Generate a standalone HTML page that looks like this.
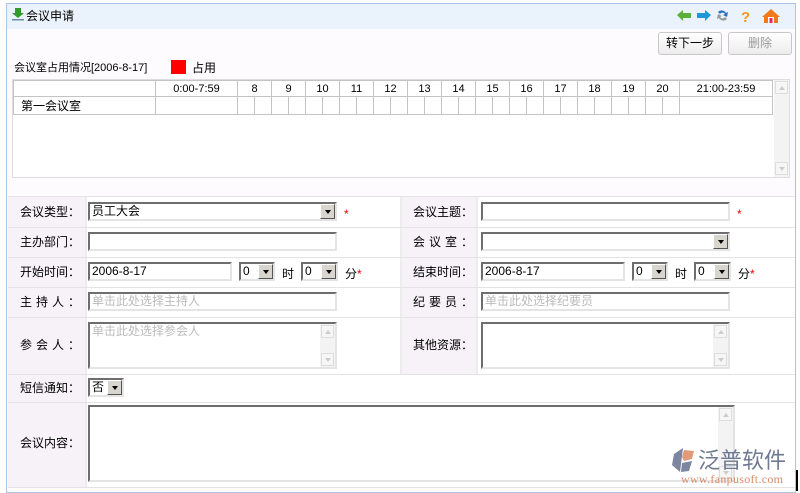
<!DOCTYPE html>
<html><head><meta charset="utf-8">
<style>
*{box-sizing:border-box;margin:0;padding:0}
body{width:800px;height:491px;background:#fff;font-family:"Liberation Sans","Noto Sans CJK SC",sans-serif;font-size:12px;color:#000;position:relative;overflow:hidden}
.a{position:absolute}
.frame{left:6px;top:3px;width:790px;height:490px;border:1px solid #a9c4e6;background:#fefbfe}
.hdr{left:7px;top:4px;width:788px;height:25px;background:#eaf2fb}
.btn{border:1px solid #c8c8c8;border-radius:3px;background:linear-gradient(#fff,#ececec);text-align:center;line-height:21px;font-size:12px}
table.tt{border-collapse:collapse;position:absolute;left:13px;top:80px;table-layout:fixed}
table.tt td{border:1px solid #c4c4c4;height:16px;font-size:11px;text-align:center;padding:0;background:#fff}
.inp{position:absolute;height:19px;background:#fff;border:2px solid;border-color:#6e6e6e #e4e4e4 #e4e4e4 #6e6e6e;font-size:12px;line-height:15px;padding-left:2px;color:#000;overflow:hidden;white-space:nowrap}
.ph{color:#bbb}
.sel .arr{position:absolute;right:0;top:0;width:15px;height:15px;background:#d8d5cf;border:1px solid;border-color:#fff #555 #555 #fff}
.sel .arr:after{content:"";position:absolute;left:4px;top:5px;border-left:3px solid transparent;border-right:3px solid transparent;border-top:4px solid #000}
.lab{position:absolute;background:#f6f2f7;text-align:center;font-size:12px}
.hl{position:absolute;height:1px;background:#e3e3e3}
.star{position:absolute;color:#e00;font-size:12px}
.sb{position:absolute;width:15px;background:#f3f3f3}
.sbb{position:absolute;left:1px;width:13px;height:13px;border:1px solid #ddd;background:#f6f6f6}
.up:after{content:"";position:absolute;left:3px;top:4px;border-left:3px solid transparent;border-right:3px solid transparent;border-bottom:4px solid #ccc}
.dn:after{content:"";position:absolute;left:3px;top:4px;border-left:3px solid transparent;border-right:3px solid transparent;border-top:4px solid #ccc}
</style></head><body>
<div class="a frame"></div>
<div class="a hdr"></div>
<svg class="a" style="left:12px;top:8px" width="12" height="13"><path d="M3 0h6v5h3l-6 5-6-5h3z" fill="#2f9a2f"/><rect x="0" y="11" width="12" height="1.5" fill="#6a8bb0"/></svg>
<div class="a" style="left:26px;top:7px;font-size:12px">会议申请</div>
<svg class="a" style="left:675px;top:8px" width="110" height="16">
<path d="M2 7l6-5v3h8v5H8v3z" fill="#5cb039"/>
<path d="M36 7l-6-5v3h-8v5h8v3z" fill="#1e98d6"/>
<path d="M43 4a5 5 0 0 1 8 1l2-1-1 5-4-2 2-1a3 3 0 0 0-5 0z" fill="#2a6fc0"/>
<path d="M52 11a5 5 0 0 1-8-1l-2 1 1-5 4 2-2 1a3 3 0 0 0 5 0z" fill="#999"/>
<text x="66" y="14" font-family="Liberation Sans" font-weight="bold" font-size="15" fill="#f39a14">?</text>
<path d="M96 1l-9 8h2v6h14V9h2z" fill="#f07a1c"/><rect x="93" y="9" width="6" height="6" fill="#fff"/><rect x="94.5" y="10" width="3" height="5" fill="#e26"/>
</svg>
<div class="a btn" style="left:658px;top:32px;width:64px;height:23px">转下一步</div>
<div class="a btn" style="left:728px;top:32px;width:64px;height:23px;color:#999">删除</div>
<div class="a" style="left:14px;top:59px;font-size:11px">会议室占用情况[2006-8-17]</div>
<div class="a" style="left:171px;top:60px;width:15px;height:14px;background:#f00"></div>
<div class="a" style="left:192px;top:59px;font-size:12px">占用</div>
<div class="a" style="left:12px;top:79px;width:778px;height:99px;background:#fff;border:1px solid #ddd"></div>
<div class="sb" style="left:774px;top:80px;height:97px"><div class="sbb up" style="top:1px"></div><div class="sbb dn" style="top:82px"></div></div>
<table class="tt">
<colgroup><col style="width:142px"><col style="width:82px">
<col style="width:17px"><col style="width:17px"><col style="width:17px"><col style="width:17px"><col style="width:17px"><col style="width:17px"><col style="width:17px"><col style="width:17px"><col style="width:17px"><col style="width:17px"><col style="width:17px"><col style="width:17px"><col style="width:17px"><col style="width:17px"><col style="width:17px"><col style="width:17px"><col style="width:17px"><col style="width:17px"><col style="width:17px"><col style="width:17px"><col style="width:17px"><col style="width:17px"><col style="width:17px"><col style="width:17px"><col style="width:17px"><col style="width:17px"><col style="width:93px"></colgroup>
<tr><td></td><td>0:00-7:59</td><td colspan="2">8</td><td colspan="2">9</td><td colspan="2">10</td><td colspan="2">11</td><td colspan="2">12</td><td colspan="2">13</td><td colspan="2">14</td><td colspan="2">15</td><td colspan="2">16</td><td colspan="2">17</td><td colspan="2">18</td><td colspan="2">19</td><td colspan="2">20</td><td>21:00-23:59</td></tr>
<tr><td style="text-align:left;padding-left:7px;font-size:12px">第一会议室</td><td></td><td></td><td></td><td></td><td></td><td></td><td></td><td></td><td></td><td></td><td></td><td></td><td></td><td></td><td></td><td></td><td></td><td></td><td></td><td></td><td></td><td></td><td></td><td></td><td></td><td></td><td></td><td></td></tr>
</table>
<div class="a" style="left:8px;top:196px;width:787px;height:291px;background:#fff"></div>
<div class="lab" style="left:8px;top:196px;width:77px;height:291px"></div>
<div class="lab" style="left:402px;top:196px;width:75px;height:178px"></div>
<div class="a" style="left:85px;top:196px;width:2px;height:291px;background:#ececec"></div>
<div class="a" style="left:400px;top:196px;width:2px;height:178px;background:#ececec"></div>
<div class="a" style="left:476px;top:196px;width:2px;height:178px;background:#ececec"></div>
<div class="hl" style="left:8px;top:196px;width:787px"></div>
<div class="hl" style="left:8px;top:227px;width:787px"></div>
<div class="hl" style="left:8px;top:257px;width:787px"></div>
<div class="hl" style="left:8px;top:287px;width:787px"></div>
<div class="hl" style="left:8px;top:317px;width:787px"></div>
<div class="hl" style="left:8px;top:374px;width:787px"></div>
<div class="hl" style="left:8px;top:402px;width:787px"></div>
<div class="hl" style="left:8px;top:487px;width:787px"></div>
<div class="a" style="left:20px;top:203px">会议类型：</div>
<div class="a" style="left:20px;top:233px">主办部门：</div>
<div class="a" style="left:20px;top:263px">开始时间：</div>
<div class="a" style="left:20px;top:293px;letter-spacing:4px">主持人：</div>
<div class="a" style="left:20px;top:336px;letter-spacing:4px">参会人：</div>
<div class="a" style="left:20px;top:379px">短信通知：</div>
<div class="a" style="left:20px;top:434px">会议内容：</div>
<div class="a" style="left:413px;top:203px">会议主题：</div>
<div class="a" style="left:413px;top:233px;letter-spacing:4px">会议室：</div>
<div class="a" style="left:413px;top:263px">结束时间：</div>
<div class="a" style="left:413px;top:293px;letter-spacing:4px">纪要员：</div>
<div class="a" style="left:413px;top:336px">其他资源：</div>
<div class="inp sel" style="left:88px;top:202px;width:249px">员工大会<span class="arr"></span></div>
<div class="star" style="left:344px;top:207px">*</div>
<div class="inp" style="left:88px;top:232px;width:249px"></div>
<div class="inp" style="left:88px;top:262px;width:144px">2006-8-17</div>
<div class="inp sel" style="left:239px;top:262px;width:36px">0<span class="arr"></span></div>
<div class="a" style="left:282px;top:265px">时</div>
<div class="inp sel" style="left:301px;top:262px;width:37px">0<span class="arr"></span></div>
<div class="a" style="left:345px;top:265px">分<span style="color:#e00">*</span></div>
<div class="inp ph" style="left:88px;top:292px;width:249px">单击此处选择主持人</div>
<div class="inp ph" style="left:88px;top:322px;width:249px;height:47px">单击此处选择参会人</div>
<div class="sb" style="left:320px;top:324px;height:43px"><div class="sbb up" style="top:1px"></div><div class="sbb dn" style="top:29px"></div></div>
<div class="inp sel" style="left:88px;top:378px;width:36px">否<span class="arr"></span></div>
<div class="inp" style="left:88px;top:405px;width:647px;height:77px"></div>
<div class="sb" style="left:718px;top:407px;height:73px"><div class="sbb up" style="top:1px"></div><div class="sbb dn" style="top:59px"></div></div>
<div class="inp" style="left:481px;top:202px;width:249px"></div>
<div class="star" style="left:737px;top:207px">*</div>
<div class="inp sel" style="left:481px;top:232px;width:249px"><span class="arr"></span></div>
<div class="inp" style="left:481px;top:262px;width:144px">2006-8-17</div>
<div class="inp sel" style="left:632px;top:262px;width:36px">0<span class="arr"></span></div>
<div class="a" style="left:675px;top:265px">时</div>
<div class="inp sel" style="left:694px;top:262px;width:37px">0<span class="arr"></span></div>
<div class="a" style="left:738px;top:265px">分<span style="color:#e00">*</span></div>
<div class="inp ph" style="left:481px;top:292px;width:249px">单击此处选择纪要员</div>
<div class="inp" style="left:481px;top:322px;width:249px;height:47px"></div>
<div class="sb" style="left:713px;top:324px;height:43px"><div class="sbb up" style="top:1px"></div><div class="sbb dn" style="top:29px"></div></div>
<svg class="a" style="left:671px;top:447px" width="26" height="26"><path d="M12 1L3 7 1 18l8 7z" fill="#7c86a0"/><path d="M13 3l10 1-2 8-8 2-2-4z" fill="#e29a78"/><path d="M11 16l10-2-3 10-8 1z" fill="#7c86a0"/></svg>
<div class="a" style="left:698px;top:446px;font-size:22px;color:#6f7a92;letter-spacing:0px;font-family:'Noto Sans CJK SC',sans-serif;line-height:26px">泛普软件</div>
<div class="a" style="left:681px;top:472px;font-family:'Liberation Serif',serif;font-size:12px;color:#d98a6a;letter-spacing:0.3px">www.fanpusoft.com</div>
<div class="a" style="left:796px;top:470px;width:2px;height:21px;background:#000"></div>
</body></html>
